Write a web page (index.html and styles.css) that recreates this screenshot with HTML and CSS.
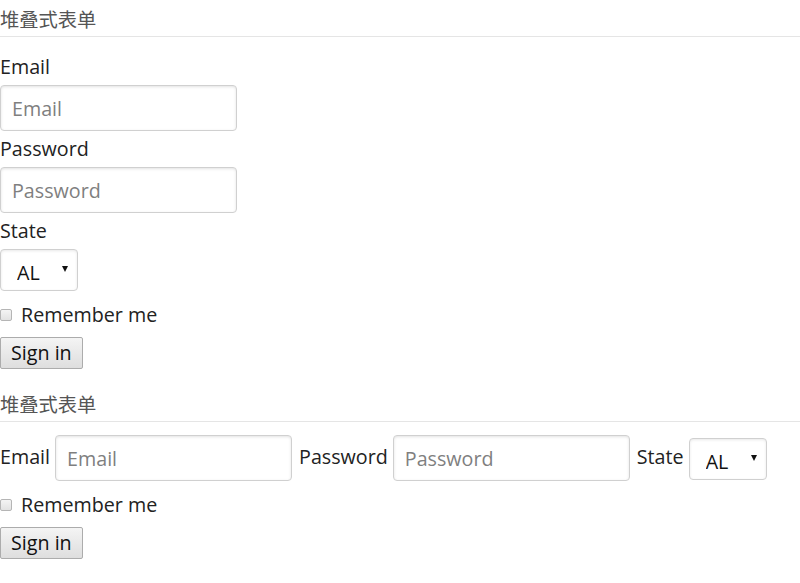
FILE: index.html
```html
<!DOCTYPE html>
<html lang="zh">
<head>
<meta charset="utf-8">
<title>堆叠式表单</title>
<link rel="stylesheet" href="styles.css">
</head>
<body>
  <div class="legend">堆叠式表单</div>
  <form class="stacked">
    <label class="lbl" for="e1">Email</label>
    <input class="field" id="e1" type="email" placeholder="Email">
    <label class="lbl" for="p1">Password</label>
    <input class="field" id="p1" type="password" placeholder="Password">
    <label class="lbl" for="s1">State</label>
    <span class="sel-wrap"><select class="sel" id="s1"><option>AL</option><option>CA</option></select></span>
    <label class="check"><input type="checkbox" class="cb"> Remember me</label>
    <div><button type="button" class="btn">Sign in</button></div>
  </form>

  <div class="legend">堆叠式表单</div>
  <form class="inline">
    <div class="row">
      <label class="ilbl" for="e2">Email</label>
      <input class="field" id="e2" type="email" placeholder="Email">
      <label class="ilbl" for="p2">Password</label>
      <input class="field" id="p2" type="password" placeholder="Password">
      <label class="ilbl" for="s2">State</label>
      <span class="sel-wrap sel-inline"><select class="sel" id="s2"><option>AL</option><option>CA</option></select></span>
    </div>
    <label class="check"><input type="checkbox" class="cb"> Remember me</label>
    <div><button type="button" class="btn">Sign in</button></div>
  </form>
</body>
</html>
```

FILE: styles.css
```css
html, body {
  margin: 0;
  padding: 0;
  background: #fff;
}
body {
  font-family: "Open Sans", "Noto Sans CJK SC", sans-serif;
  font-size: 19.7px;
  color: #222;
}
.legend {
  height: 36px;
  line-height: 38px;
  font-size: 19.3px;
  color: #555;
  border-bottom: 1px solid #e5e5e5;
  box-sizing: content-box;
  font-family: "Noto Sans CJK SC", sans-serif;
}
form {
  display: flex;
  flex-direction: column;
  align-items: flex-start;
  padding-top: 16px;
  padding-bottom: 16px;
}
.inline { padding-top: 13px; }
.lbl {
  line-height: 28px;
  height: 28px;
  margin-bottom: 4px;
}
.field {
  box-sizing: border-box;
  width: 237px;
  height: 46px;
  margin: 0 0 4px 0;
  padding: 0 11px;
  border: 1px solid #d0d0d0;
  border-radius: 4px;
  box-shadow: inset 0 1px 3px #e2e2e2;
  font-family: inherit;
  font-size: 19.7px;
  color: #222;
  outline: none;
}
.field::placeholder { color: #7f7f7f; }
.sel-wrap {
  position: relative;
  display: inline-block;
  width: 78px;
  height: 42px;
}
.sel-wrap::after {
  content: "";
  position: absolute;
  right: 10px;
  top: 17px;
  border-left: 3px solid transparent;
  border-right: 3px solid transparent;
  border-top: 6px solid #111;
  pointer-events: none;
}
.sel {
  appearance: none;
  -webkit-appearance: none;
  box-sizing: border-box;
  width: 78px;
  height: 42px;
  padding: 4px 0 0 16px;
  border: 1px solid #d0d0d0;
  border-radius: 4px;
  background: #fff;
  box-shadow: inset 0 1px 3px #e8e8e8;
  font-family: inherit;
  font-size: 19.7px;
  color: #111;
  outline: none;
}
.check {
  display: flex;
  align-items: center;
  height: 28px;
  margin-top: 10px;
  line-height: 28px;
}
.cb {
  appearance: none;
  -webkit-appearance: none;
  width: 12px;
  height: 12px;
  margin: 0 9px 0 0;
  border: 1px solid #b5b5b5;
  border-radius: 2px;
  background: linear-gradient(#f4f4f4, #e2e2e2);
}
.btn {
  margin-top: 8px;
  height: 32px;
  padding: 0 10px;
  border: 1px solid #acacac;
  border-radius: 2px;
  background: linear-gradient(#f4f4f4, #dedede);
  font-family: inherit;
  font-size: 19.7px;
  color: #111;
  line-height: 28px;
}
.row {
  display: flex;
  align-items: center;
}
.row .field { margin: 0 7px 0 0; }
.ilbl {
  margin-right: 5px;
  margin-top: -3px;
}
.sel-inline { margin-top: 2px; }
```
